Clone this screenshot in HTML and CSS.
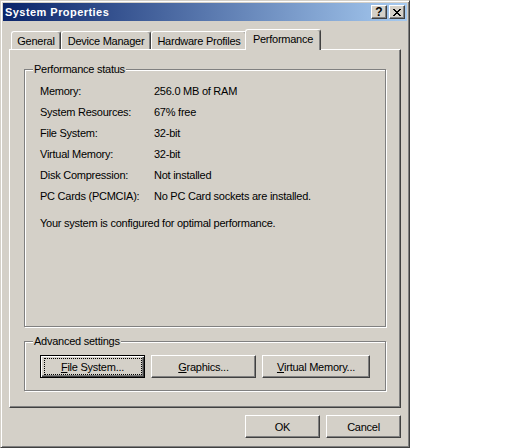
FILE: index.html
```html
<!DOCTYPE html>
<html>
<head>
<meta charset="utf-8">
<title>System Properties</title>
<link rel="stylesheet" href="styles.css">
</head>
<body>
<div class="window">
  <div class="titlebar">
    <span class="title">System Properties</span>
    <div class="tb-buttons">
      <button class="tb-btn help">?</button>
      <button class="tb-btn close">
        <svg width="8" height="7" viewBox="0 0 8 7" shape-rendering="crispEdges">
          <path d="M0 0h2v1h-2z M6 0h2v1h-2z M1 1h2v1h-2z M5 1h2v1h-2z M2 2h4v1h-4z M3 3h2v1h-2z M2 4h4v1h-4z M1 5h2v1h-2z M5 5h2v1h-2z M0 6h2v1h-2z M6 6h2v1h-2z" fill="#000"/>
        </svg>
      </button>
    </div>
  </div>
  <div class="body">
    <div class="tabs">
      <div class="tab t-general">General</div>
      <div class="tab t-device">Device Manager</div>
      <div class="tab t-hardware">Hardware Profiles</div>
      <div class="tab t-perf selected">Performance</div>
    </div>
    <div class="panel">
      <div class="group status">
        <span class="legend">Performance status</span>
        <div class="row"><span class="label">Memory:</span><span class="value">256.0 MB of RAM</span></div>
        <div class="row"><span class="label">System Resources:</span><span class="value">67% free</span></div>
        <div class="row"><span class="label">File System:</span><span class="value">32-bit</span></div>
        <div class="row"><span class="label">Virtual Memory:</span><span class="value">32-bit</span></div>
        <div class="row"><span class="label">Disk Compression:</span><span class="value">Not installed</span></div>
        <div class="row"><span class="label">PC Cards (PCMCIA):</span><span class="value">No PC Card sockets are installed.</span></div>
        <p class="note">Your system is configured for optimal performance.</p>
      </div>
      <div class="group advanced">
        <span class="legend">Advanced settings</span>
        <div class="btnrow">
          <button class="btn default b-file"><u>F</u>ile System...</button>
          <button class="btn b-graphics"><u>G</u>raphics...</button>
          <button class="btn b-virtual"><u>V</u>irtual Memory...</button>
        </div>
      </div>
    </div>
    <div class="footer">
      <button class="btn b-dlg">OK</button>
      <button class="btn b-dlg">Cancel</button>
    </div>
  </div>
</div>
</body>
</html>
```

FILE: styles.css
```css
* { box-sizing: border-box; }

body {
  margin: 0;
  background: #fff;
  font-family: "Liberation Sans", Arial, sans-serif;
  font-size: 11px;
  letter-spacing: -0.25px;
  color: #000;
}

button {
  font: inherit;
  letter-spacing: inherit;
  color: inherit;
  margin: 0;
  padding: 0;
}

.window {
  width: 410px;
  height: 448px;
  background: #d4d0c8;
  border: 1px solid;
  border-color: #d4d0c8 #404040 #404040 #d4d0c8;
  box-shadow: inset 1px 1px #fff, inset -1px -1px #808080;
  padding: 2px;
  display: flex;
  flex-direction: column;
}

.titlebar {
  height: 18px;
  flex: none;
  background: linear-gradient(to right, #0a246a, #a6caf0);
  display: flex;
  align-items: center;
  padding: 0 2px 0 2px;
}

.title {
  flex: 1;
  color: #fff;
  font-weight: bold;
  letter-spacing: 0.45px;
  white-space: nowrap;
}

.tb-buttons {
  display: flex;
  gap: 2px;
}

.tb-btn {
  width: 16px;
  height: 14px;
  background: #d4d0c8;
  border: 1px solid;
  border-color: #fff #404040 #404040 #fff;
  box-shadow: inset -1px -1px #808080;
  display: flex;
  align-items: center;
  justify-content: center;
}

.tb-btn.help {
  font-weight: bold;
  font-size: 12px;
  letter-spacing: 0;
  line-height: 12px;
}

.tb-btn.close svg {
  display: block;
  margin-left: -1px;
}

.body {
  flex: 1;
  display: flex;
  flex-direction: column;
  padding: 8px 6px 7px 6px;
}

.tabs {
  height: 20px;
  flex: none;
  display: flex;
  align-items: flex-end;
  padding-left: 2px;
  position: relative;
  z-index: 1;
}

.tab {
  height: 18px;
  background: #d4d0c8;
  border-top: 1px solid #fff;
  border-left: 1px solid #fff;
  border-right: 1px solid #404040;
  box-shadow: inset -1px 0 #808080;
  border-radius: 3px 3px 0 0;
  display: flex;
  align-items: center;
  justify-content: center;
  white-space: nowrap;
}

.t-general { width: 50px; }
.t-device { width: 90px; }
.t-hardware { width: 96px; }
.t-perf { width: 72px; }

.tab.selected {
  width: 76px;
  height: 21px;
  margin: 0 -2px -1px -2px;
  padding-bottom: 2px;
  position: relative;
  z-index: 2;
}

.panel {
  height: 359px;
  flex: none;
  border: 1px solid;
  border-color: #fff #404040 #404040 #fff;
  box-shadow: inset -1px -1px #808080;
  padding: 19px 14px 16px 14px;
  display: flex;
  flex-direction: column;
  gap: 14px;
}

.group {
  position: relative;
  border: 1px solid #808080;
  box-shadow: inset 1px 1px #fff, 1px 1px #fff;
}

.legend {
  position: absolute;
  top: -7px;
  left: 8px;
  padding: 0 1px;
  line-height: 13px;
  background: #d4d0c8;
  white-space: nowrap;
}

.status {
  height: 258px;
  padding: 10px 0 0 15px;
}

.row {
  height: 21px;
  display: flex;
  align-items: center;
  white-space: nowrap;
}

.label {
  width: 114px;
  flex: none;
}

.note {
  margin: 7px 0 0 0;
  line-height: 21px;
}

.advanced {
  height: 50px;
  padding: 13px 0 0 15px;
}

.btnrow {
  display: flex;
  gap: 6px;
}

.btn {
  position: relative;
  height: 23px;
  background: #d4d0c8;
  border: 1px solid;
  border-color: #fff #404040 #404040 #fff;
  box-shadow: inset -1px -1px #808080;
  display: flex;
  align-items: center;
  justify-content: center;
  white-space: nowrap;
}

.btn u {
  text-decoration: underline;
  text-underline-offset: 1px;
}

.btn.default {
  border-color: #000;
  box-shadow: inset 1px 1px #fff, inset -1px -1px #404040, inset -2px -2px #808080;
}

.btn.default::after {
  content: "";
  position: absolute;
  left: 3px;
  top: 2px;
  right: 2px;
  bottom: 2px;
  border: 1px dotted #000;
}

.b-file { width: 105px; }
.b-graphics { width: 105px; }
.b-virtual { width: 108px; }

.footer {
  margin-top: 7px;
  display: flex;
  justify-content: flex-end;
  gap: 6px;
}

.b-dlg { width: 75px; }
```
